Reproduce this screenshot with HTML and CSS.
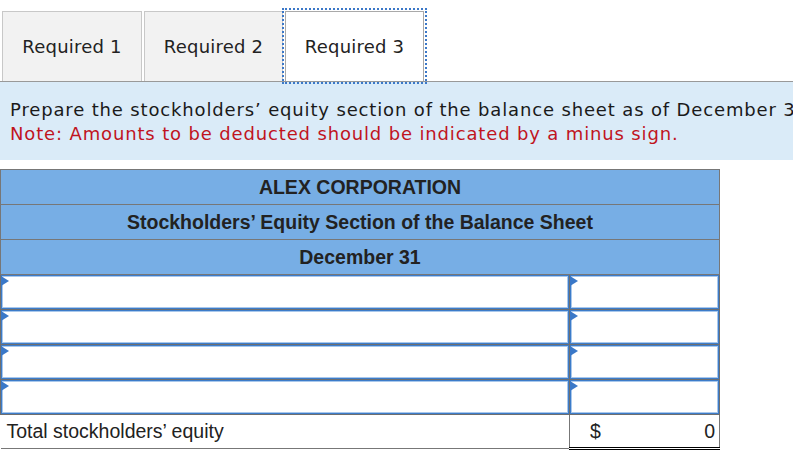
FILE: index.html
```html
<!DOCTYPE html>
<html>
<head>
<meta charset="utf-8">
<link rel="stylesheet" href="styles.css">
</head>
<body>
<div class="tabs">
  <div class="tab first">Required 1</div>
  <div class="tab">Required 2</div>
  <div class="tab active">Required 3</div>
</div>
<div class="instr">
  <p class="q">Prepare the stockholders’ equity section of the balance sheet as of December 31.</p>
  <p class="note">Note: Amounts to be deducted should be indicated by a minus sign.</p>
</div>
<table class="sheet">
  <tr class="hdr"><th colspan="2">ALEX CORPORATION</th></tr>
  <tr class="hdr"><th colspan="2">Stockholders’ Equity Section of the Balance Sheet</th></tr>
  <tr class="hdr"><th colspan="2">December 31</th></tr>
  <tr class="in"><td class="lab"><div class="box"><span class="flag"></span></div></td><td class="amt"><div class="box"><span class="flag"></span></div></td></tr>
  <tr class="in"><td class="lab"><div class="box"><span class="flag"></span></div></td><td class="amt"><div class="box"><span class="flag"></span></div></td></tr>
  <tr class="in"><td class="lab"><div class="box"><span class="flag"></span></div></td><td class="amt"><div class="box"><span class="flag"></span></div></td></tr>
  <tr class="in"><td class="lab"><div class="box"><span class="flag"></span></div></td><td class="amt"><div class="box"><span class="flag"></span></div></td></tr>
  <tr class="total"><td class="tlab">Total stockholders’ equity</td><td class="tamt"><div class="tval"><span>$</span><span>0</span></div></td></tr>
</table>
</body>
</html>
```
FILE: styles.css
```css
body {
  margin: 0;
  font-family: "DejaVu Sans", Verdana, sans-serif;
  background: #fff;
  color: #222;
}
.tabs {
  display: flex;
  gap: 2px;
  padding: 11px 0 0 2px;
  height: 70px;
  border-bottom: 1px solid #999;
}
.tab {
  width: 137px;
  border: 1px solid #c8c8c8;
  border-bottom: none;
  background: #f2f2f2;
  display: flex;
  align-items: center;
  justify-content: center;
  font-size: 18px;
  letter-spacing: 0.2px;
  color: #222;
}
.tab.first {
  width: 138px;
}
.tab.active {
  background: #fff;
  border-color: #a9a9a9;
  outline: 2px dotted #3b78c8;
  outline-offset: 1px;
}
.instr {
  background: #daebf8;
  height: 62px;
  padding: 16px 0 0 10px;
  overflow: hidden;
  white-space: nowrap;
  font-size: 18px;
  letter-spacing: 0.85px;
  line-height: 24px;
}
.instr p {
  margin: 0;
}
.q { color: #1a1a1a; }
.note { color: #c0141e; }
.sheet {
  margin-top: 9px;
  width: 720px;
  border-collapse: collapse;
  font-family: "Liberation Sans", Arial, sans-serif;
  font-size: 19.5px;
}
.hdr th {
  background: #77aee5;
  border: 1px solid #777;
  height: 34px;
  padding: 0;
  font-weight: bold;
  color: #222;
  text-align: center;
}
.in td {
  border: 1px solid #6f6f6f;
  padding: 0;
  height: 34px;
}
.lab { width: 568px; }
.box {
  position: relative;
  height: 34px;
  box-sizing: border-box;
  border: 1px solid #3d7cc9;
  box-shadow: inset 0 0 0 1px #a9c8ec;
  background: #fff;
}
.flag {
  position: absolute;
  top: 0;
  left: -1px;
  width: 0;
  height: 0;
  border-left: 8px solid #3a78c8;
  border-top: 5px solid transparent;
  border-bottom: 5px solid transparent;
}
.total td {
  height: 32px;
  padding: 0;
  color: #222;
}
.tlab {
  padding-left: 6px !important;
  border-bottom: 1px solid #777;
}
.tamt {
  border-left: 1px solid #777;
  border-right: 1px solid #777;
  border-bottom: 3px double #000;
}
.tval {
  display: flex;
  justify-content: space-between;
  padding: 0 4px 0 20px;
}
```
